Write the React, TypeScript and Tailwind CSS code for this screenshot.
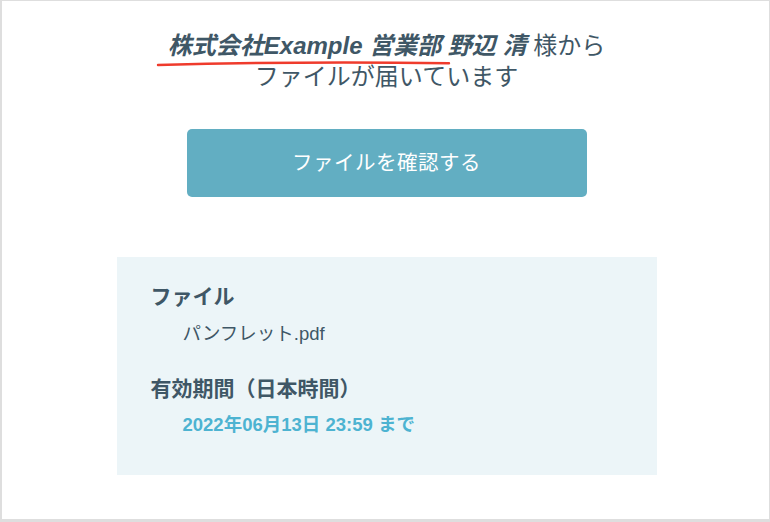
export default function App() {
  const font = { fontFamily: '"Liberation Sans", "Noto Sans CJK JP", sans-serif' };
  return (
    <div
      className="w-[770px] h-[522px] box-border bg-white border-t border-r border-l-2 border-b-[3px] border-[#dedede] text-[#3f5766]"
      style={font}
    >
      <div className="flex flex-col items-center pt-[29px] pl-[2px]">
        <div className="relative text-[24px] leading-[31px] text-center">
          <p>
            <span className="font-bold italic">株式会社Example 営業部 野辺 清</span> 様から
          </p>
          <p>ファイルが届いています</p>
          <svg
            className="absolute left-[-12px] top-[29px]"
            width="300"
            height="8"
            viewBox="0 0 300 8"
            fill="none"
          >
            <path d="M2 6 Q 150 2 293 4.3" stroke="#ef3b2c" strokeWidth="2.4" strokeLinecap="round" />
          </svg>
        </div>

        <button className="mt-[37px] w-[400px] h-[68px] rounded-[5px] bg-[#62aec2] text-white text-[20.5px] tracking-[0.5px]">
          ファイルを確認する
        </button>

        <div className="mt-[60px] w-[540px] bg-[#ecf5f8] pt-[26px] pb-[38px] pl-[34px]">
          <p className="text-[21px] leading-[28px] font-bold">ファイル</p>
          <p className="mt-[11px] pl-[32px] text-[18.5px] leading-[24px]">パンフレット.pdf</p>
          <p className="mt-[29px] text-[21px] leading-[28px] font-bold">有効期間（日本時間）</p>
          <p className="mt-[10px] pl-[32px] text-[18.5px] leading-[24px] font-bold text-[#4db3d1]">
            2022年06月13日 23:59 まで
          </p>
        </div>
      </div>
    </div>
  );
}
